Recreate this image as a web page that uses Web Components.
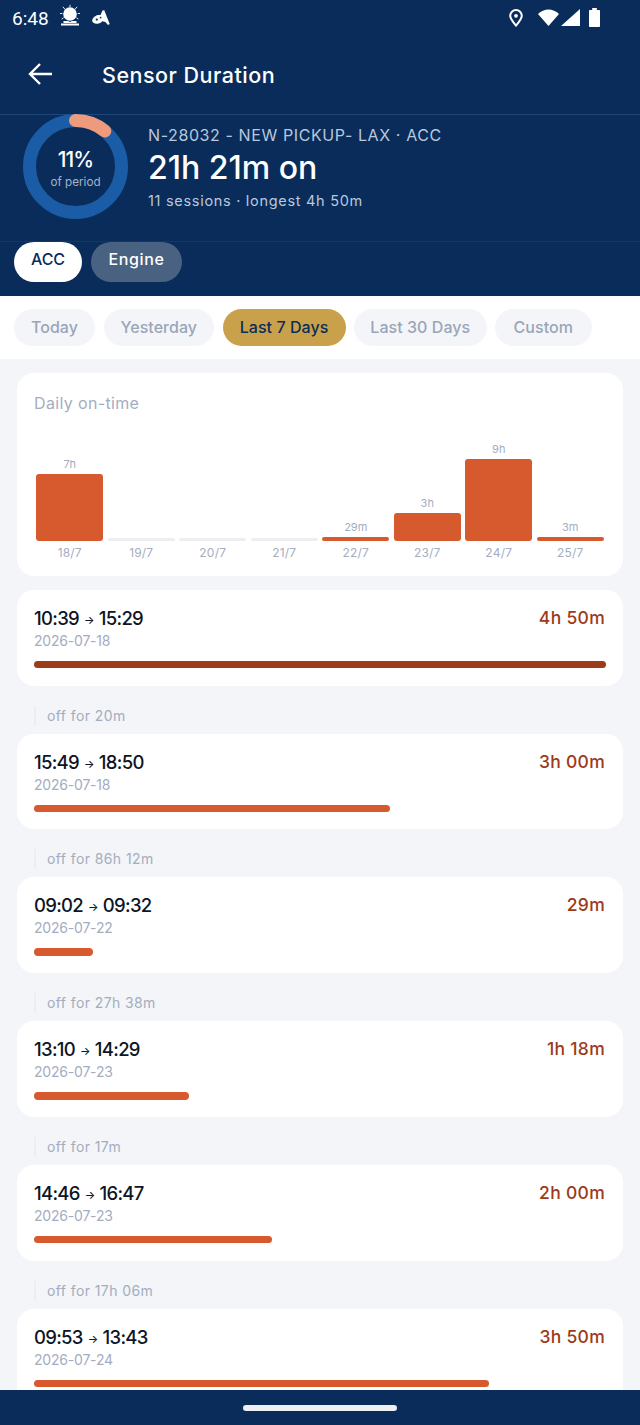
<!DOCTYPE html>
<html><head><meta charset="utf-8">
<style>
html,body{margin:0;padding:0;background:#f3f5f8;}
body{width:640px;height:1425px;overflow:hidden;font-family:Inter,"Liberation Sans",sans-serif;}
</style></head>
<body>
<duration-screen></duration-screen>
<script>
function def(name, css, html){
  customElements.define(name, class extends HTMLElement{
    connectedCallback(){
      if(this.shadowRoot) return;
      const r=this.attachShadow({mode:'open'});
      const attrs=n=>this.getAttribute(n)||'';
      r.innerHTML='<style>'+css+'</style>'+(typeof html==='function'?html(attrs):html);
    }
  });
}
def('status-bar',`
:host{display:flex;align-items:center;height:36px;padding:0 40px 0 12px;color:#fff;font:400 19px Roboto,sans-serif}
.t{width:38px;margin-right:8px}
svg{display:block;flex:none}
.sp{flex:1}
.n{margin-right:9px;margin-bottom:4px}
.r{display:flex;align-items:center;margin-bottom:1px}
`,`<span class="t">6:48</span>
<svg class="n" width="24" height="24" viewBox="0 0 24 24" fill="#fff"><circle cx="12" cy="10" r="6.8"/><path d="M3 19.500h18v2H3zM5.500 17h4.500l2 1 2-1h4.500v2h-13z"/><path d="M12 .8v2.400M4.800 2.800l2 2.200M19.200 2.800l-2 2.200M2 9.500h2.400M19.600 9.500H22M3.600 15l2-1.200M20.400 15l-2-1.200" stroke="#fff" stroke-width=".9" fill="none"/></svg>
<svg width="20" height="20" viewBox="0 0 20 20" fill="#fff"><path d="M11.500 2.500l1.800-.2 5.400 13.700-1.700 1-2.600-2.900-3.200-.8c-1 1.700-3.200 2.700-5.500 2.500-2.600-.2-4.400-1.300-4.500-3-.1-2.400 2.600-5.200 5.800-5.900l2.500.2z"/><circle cx="5.800" cy="11.600" r="1.100" fill="#0a2c5a"/><circle cx="9.600" cy="9.600" r=".9" fill="#0a2c5a"/></svg>
<span class="sp"></span>
<div class="r">
<svg width="14" height="18" viewBox="0 0 14 18" style="margin-right:15px" fill="none" stroke="#fff" stroke-width="2"><path d="M7 16.600C3.200 12.200 1.200 9.400 1.200 6.800a5.800 5.800 0 0 1 11.600 0c0 2.600-2 5.400-5.800 9.800z"/><circle cx="7" cy="6.800" r="1.900" fill="#fff" stroke="none"/></svg>
<svg width="21" height="17" viewBox="0 0 21 17" fill="#fff"><path d="M0 5C3 2 6.800.5 10.500.5S18 2 21 5L10.500 17z"/></svg>
<svg width="19" height="17" viewBox="0 0 19 17" fill="#fff" style="margin-left:2px"><path d="M19 0v17H0z"/></svg>
<svg width="11" height="19" viewBox="0 0 11 19" fill="#fff" style="margin-left:9px"><path d="M3.200 0h4.600v2H10c.600 0 1 .400 1 1v15c0 .600-.400 1-1 1H1c-.600 0-1-.400-1-1V3c0-.600.400-1 1-1h2.200z"/></svg>
</div>`);
def('app-bar',`
:host{display:flex;align-items:center;padding-bottom:2px;border-bottom:1px solid #20477a;box-sizing:border-box;height:79px;color:#fff}
svg{margin-left:27px;margin-right:49px;display:block}
h1{margin:0;font:500 21.500px Inter,sans-serif;letter-spacing:.5px;position:relative;top:1px}
`,`<svg width="26" height="26" viewBox="0 0 26 26" fill="none" stroke="#fff" stroke-width="2.400"><path d="M25 13H3M13 3L3 13l10 10"/></svg><h1>Sensor Duration</h1>`);
def('ring-gauge',`
:host{display:block;position:relative;width:105px;height:105px;flex:none;margin-top:-1px}
svg{display:block}
.c{position:absolute;inset:0;padding-top:6px;box-sizing:border-box;display:flex;flex-direction:column;align-items:center;justify-content:center;color:#fff}
b{font:500 21px Inter,sans-serif;letter-spacing:-1px;line-height:24px;margin-top:-1px}
span{font:400 11.700px Inter,sans-serif;color:#a3b3ca;line-height:15px;margin-top:3px}
`,`<svg width="105" height="105" viewBox="0 0 105 105" fill="none" stroke-width="13"><circle cx="52.500" cy="52.500" r="46" stroke="#1a5da6"/><path d="M52.500 6.500A46 46 0 0 1 81.800 17" stroke="#ee9a7c" stroke-linecap="round"/></svg>
<div class="c"><b>11%</b><span>of period</span></div>`);
def('summary-hero',`
:host{display:flex;align-items:flex-start;height:127px;padding:0 0 0 23px;box-sizing:border-box;border-bottom:1px solid #143766;color:#fff}
.t{margin-left:20px;padding-top:10px}
.a{font:400 16px Inter,sans-serif;color:#b9c8dc;line-height:20px;letter-spacing:.6px}
.b{font:500 32px Inter,sans-serif;line-height:40px;margin-top:3px;letter-spacing:0}
.c{font:400 14.500px Inter,sans-serif;color:#b9c8dc;line-height:20px;margin-top:3px;letter-spacing:.7px}
`,`<ring-gauge></ring-gauge><div class="t"><div class="a">N-28032 - NEW PICKUP- LAX · ACC</div><div class="b">21h 21m on</div><div class="c">11 sessions · longest 4h 50m</div></div>`);
def('tab-pill',`
:host{display:block}
div{height:40px;border-radius:20px;display:flex;align-items:center;justify-content:center;font:500 16px Inter,sans-serif;padding-bottom:6px;box-sizing:border-box}
:host([on]) div{background:#fff;color:#0a2c5a;width:68px}
:host(:not([on])) div{background:#4a6281;color:#fff;width:91px;letter-spacing:.6px}
`,`<div><slot></slot></div>`);
def('sensor-tabs',`
:host{display:flex;gap:9px;height:54px;padding:0 0 0 14px;box-sizing:border-box}
`,`<slot></slot>`);
def('nav-header',`
:host{display:block;background:#0a2c5a}
`,`<status-bar></status-bar><app-bar></app-bar><summary-hero></summary-hero><sensor-tabs><tab-pill on>ACC</tab-pill><tab-pill>Engine</tab-pill></sensor-tabs>`);
def('range-pill',`
:host{display:block;height:37px;border-radius:19px;background:#f3f5f8;color:#9aa5b8;font:500 16px Inter,sans-serif;line-height:37px;text-align:center;letter-spacing:.05px}
:host([on]){background:#c9a14a;color:#0a2c5a}
`,`<slot></slot>`);
def('range-filter',`
:host{display:flex;gap:8.500px;height:63px;padding:13px 0 0 14px;box-sizing:border-box;background:#fff}
`,`<slot></slot>`);
def('chart-col',`
:host{display:flex;flex-direction:column;align-items:center;flex:1;justify-content:flex-end}
.v{font:400 11px Inter,sans-serif;color:#a3adbf;line-height:13px;margin-bottom:3px}
.bar{width:67px;background:#d75a2e;border-radius:3px}
:host([empty]) .bar{background:#eceef2;border-radius:2px}
.d{font:400 12px Inter,sans-serif;color:#a3adbf;line-height:14px;margin-top:5px;height:14px;letter-spacing:.2px}
`,a=>`<div class="v">${a('v')}</div><div class="bar" style="height:${a('h')}px"></div><div class="d">${a('d')}</div>`);
def('chart-card',`
:host{display:block;margin:14px 17px 0;height:203px;box-sizing:border-box;background:#fff;border-radius:17px;padding:20px 17px 0}
.t{font:400 16px Inter,sans-serif;color:#a3adbf;line-height:20px;letter-spacing:.35px}
.g{display:flex;height:126px;margin-top:21px;align-items:flex-end}
`,`<div class="t">Daily on-time</div><div class="g"><slot></slot></div>`);
def('session-card',`
:host{display:block;background:#fff;border-radius:17px;height:95.750px;box-sizing:border-box;padding:17px 17px 0;overflow:hidden}
.r{display:flex;justify-content:space-between;align-items:flex-start}
.t{font:550 18.500px Inter,sans-serif;color:#0d1526;line-height:22px;letter-spacing:-.7px}
.t i{font-style:normal;font-size:11px;margin:0 5px;position:relative;top:-1px}
.m{font:500 17.500px Inter,sans-serif;color:#9c3a1b;line-height:22px;letter-spacing:.3px;margin-right:1px}
.d{font:400 14px Inter,sans-serif;color:#a3adbf;line-height:18px;margin-top:0;letter-spacing:-.2px}
.b{height:7.500px;border-radius:4px;background:#d75a2e;margin-top:11px}
:host([long]) .b{background:#9c3a1b}
`,a=>`<div class="r"><div class="t">${a('a')}<i>→</i>${a('z')}</div><div class="m">${a('m')}</div></div><div class="d">${a('d')}</div><div class="b" style="width:${a('w')}px"></div>`);
def('gap-note',`
:host{display:block;height:48px;box-sizing:border-box;padding:20px 0 0 17px}
div{border-left:2px solid #eceef2;padding-left:11px;height:20px;font:400 14px Inter,sans-serif;color:#a3adbf;line-height:20px;letter-spacing:.4px}
`,`<div><slot></slot></div>`);
def('session-list',`
:host{display:block;margin:13.750px 17px 0}
`,`<slot></slot>`);
def('gesture-bar',`
:host{position:absolute;left:0;right:0;bottom:0;height:35px;background:#0a2c5a;display:flex;align-items:center;justify-content:center}
div{width:154px;height:6px;border-radius:3px;background:#eef0f4}
`,`<div></div>`);
def('duration-screen',`
:host{display:block;position:relative;width:640px;height:1425px;overflow:hidden;background:#f3f5f8}
`,`<nav-header></nav-header><range-filter><range-pill style="width:81px">Today</range-pill><range-pill style="width:110.500px">Yesterday</range-pill><range-pill on style="width:123px">Last 7 Days</range-pill><range-pill style="width:132.500px">Last 30 Days</range-pill><range-pill style="width:96.500px">Custom</range-pill></range-filter>
<chart-card>
<chart-col v="7h" h="67" d="18/7"></chart-col>
<chart-col empty h="3" d="19/7"></chart-col>
<chart-col empty h="3" d="20/7"></chart-col>
<chart-col empty h="3" d="21/7"></chart-col>
<chart-col v="29m" h="4" d="22/7"></chart-col>
<chart-col v="3h" h="28" d="23/7"></chart-col>
<chart-col v="9h" h="82" d="24/7"></chart-col>
<chart-col v="3m" h="4" d="25/7"></chart-col>
</chart-card>
<session-list>
<session-card long a="10:39" z="15:29" m="4h 50m" d="2026-07-18" w="572"></session-card>
<gap-note>off for 20m</gap-note>
<session-card a="15:49" z="18:50" m="3h 00m" d="2026-07-18" w="356"></session-card>
<gap-note>off for 86h 12m</gap-note>
<session-card a="09:02" z="09:32" m="29m" d="2026-07-22" w="59"></session-card>
<gap-note>off for 27h 38m</gap-note>
<session-card a="13:10" z="14:29" m="1h 18m" d="2026-07-23" w="155"></session-card>
<gap-note>off for 17m</gap-note>
<session-card a="14:46" z="16:47" m="2h 00m" d="2026-07-23" w="238"></session-card>
<gap-note>off for 17h 06m</gap-note>
<session-card a="09:53" z="13:43" m="3h 50m" d="2026-07-24" w="455"></session-card>
</session-list>
<gesture-bar></gesture-bar>`);
</script>
</body></html>
